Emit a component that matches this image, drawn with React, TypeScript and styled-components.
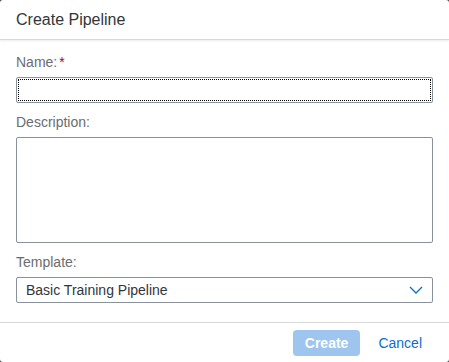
import * as React from "react";
import styled, { createGlobalStyle } from "styled-components";

const GlobalStyle = createGlobalStyle`
    html, body {
        margin: 0;
        padding: 0;
        background: #4a4a4a;
    }
    * {
        box-sizing: border-box;
    }
`;

const Dialog = styled.div`
    width: 449px;
    height: 362px;
    background: #ffffff;
    border-radius: 3px;
    display: flex;
    flex-direction: column;
    font-family: "Liberation Sans", Arial, sans-serif;
    color: #32363a;
    overflow: hidden;
`;

const Header = styled.header`
    height: 40px;
    flex: none;
    display: flex;
    align-items: center;
    padding: 0 16px;
    font-size: 16px;
    border-bottom: 1px solid #d9d9d9;
    box-shadow: 0 1px 2px rgba(0, 0, 0, 0.08);
`;

const Content = styled.div`
    flex: 1;
    padding: 14px 16px 0;
    display: flex;
    flex-direction: column;
`;

const Field = styled.div<{ $first?: boolean }>`
    display: flex;
    flex-direction: column;
    margin-top: ${p => (p.$first ? 0 : 11)}px;
`;

const Label = styled.label`
    font-size: 14px;
    line-height: 16px;
    color: #6a6d70;
    margin-bottom: 7px;
`;

const Required = styled.span`
    color: #bb0000;
    margin-left: 2px;
`;

const Input = styled.input<{ $focused?: boolean }>`
    height: 26px;
    width: 100%;
    border: 1px solid #89919a;
    border-radius: 2px;
    padding: 0 8px;
    font: inherit;
    font-size: 14px;
    background: #fff;
    outline: ${p => (p.$focused ? "1px dotted #000" : "none")};
    outline-offset: -3px;
`;

const TextArea = styled.textarea`
    height: 106px;
    width: 100%;
    border: 1px solid #89919a;
    border-radius: 2px;
    padding: 6px 8px;
    font: inherit;
    font-size: 14px;
    resize: none;
    outline: none;
`;

const Select = styled.div`
    height: 26px;
    border: 1px solid #89919a;
    border-radius: 2px;
    display: flex;
    align-items: center;
    justify-content: space-between;
    padding: 0 9px 0 9px;
    font-size: 14px;
    color: #32363a;
`;

const Footer = styled.footer`
    height: 40px;
    flex: none;
    border-top: 1px solid #d9d9d9;
    display: flex;
    align-items: center;
    justify-content: flex-end;
    padding: 0 16px;
    gap: 7px;
`;

const Button = styled.button<{ $emphasized?: boolean }>`
    height: 26px;
    min-width: 2.25rem;
    padding: 0 ${p => (p.$emphasized ? 11 : 10)}px;
    border-radius: 4px;
    font-family: inherit;
    font-size: 14px;
    border: 1px solid transparent;
    cursor: pointer;
    background: ${p => (p.$emphasized ? "#9dc5ed" : "transparent")};
    color: ${p => (p.$emphasized ? "#ffffff" : "#0a6ed1")};
    font-weight: ${p => (p.$emphasized ? 700 : 400)};
    &:disabled {
        cursor: default;
    }
`;

const ChevronDown = () => (
    <svg width="14" height="8" viewBox="0 0 14 8" fill="none">
        <path d="M1 1l6 6 6-6" stroke="#0a6ed1" strokeWidth="1.3" />
    </svg>
);

export default function App() {
    return <>
        <GlobalStyle />
        <Dialog>
            <Header>Create Pipeline</Header>
            <Content>
                <Field $first>
                    <Label>Name:<Required>*</Required></Label>
                    <Input $focused />
                </Field>
                <Field>
                    <Label>Description:</Label>
                    <TextArea />
                </Field>
                <Field>
                    <Label>Template:</Label>
                    <Select>
                        <span>Basic Training Pipeline</span>
                        <ChevronDown />
                    </Select>
                </Field>
            </Content>
            <Footer>
                <Button $emphasized disabled>Create</Button>
                <Button>Cancel</Button>
            </Footer>
        </Dialog>
    </>;
}
